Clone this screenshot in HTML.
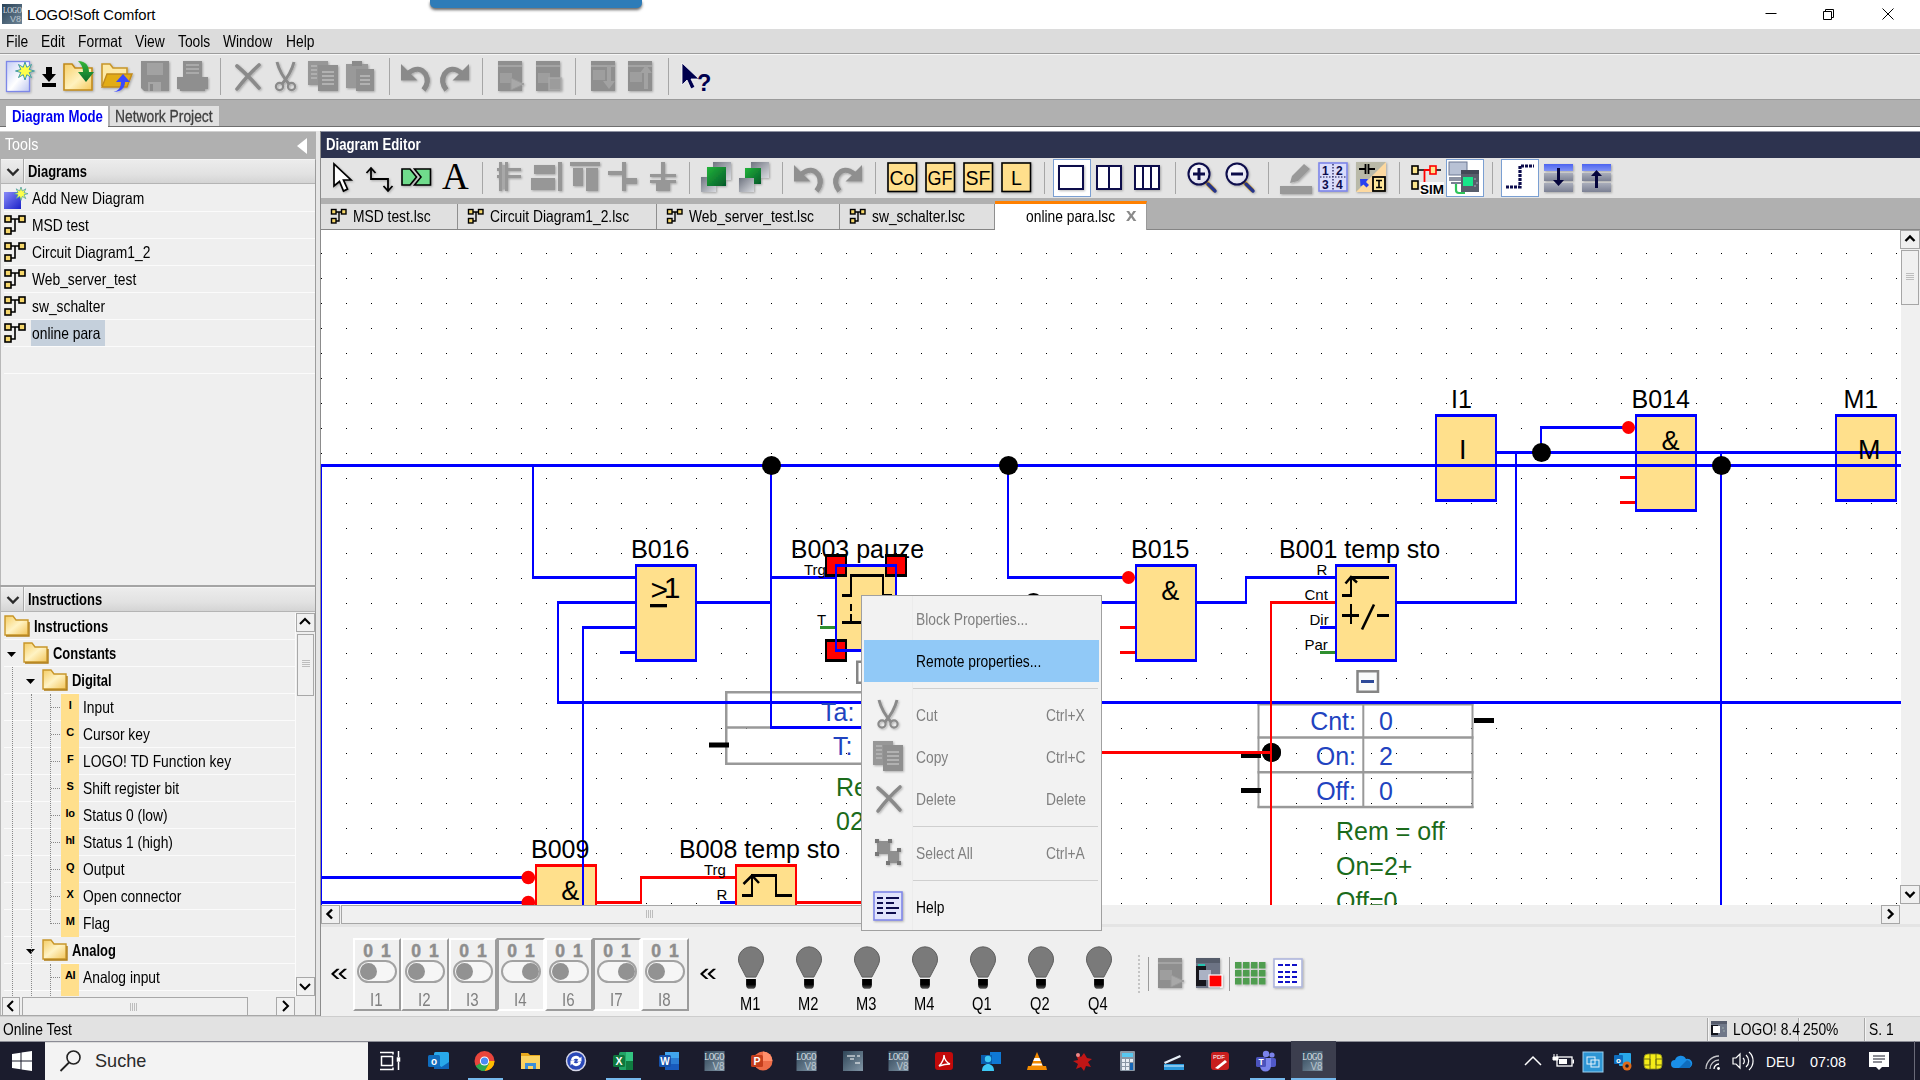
<!DOCTYPE html>
<html lang="en">
<head>
<meta charset="utf-8">
<title>LOGO!Soft Comfort</title>
<style>
*{box-sizing:border-box;margin:0;padding:0}
html,body{width:1920px;height:1080px;overflow:hidden;background:#efefef}
body{position:relative;font-family:"Liberation Sans",sans-serif;font-size:16px;color:#000}
.a{position:absolute}
.t{position:absolute;white-space:nowrap;transform-origin:0 50%;transform:scaleX(.838);line-height:20px;font-size:16.5px}
.b{font-weight:bold}
svg{position:absolute;overflow:visible}
</style>
</head>
<body>
<!-- title bar -->
<div class="a" style="left:0;top:0;width:1920px;height:29px;background:#fff"></div>
<svg style="left:2px;top:4px" width="20" height="20" viewBox="0 0 20 20">
<defs><linearGradient id="lg0" x1="0" y1="0" x2="1" y2="1"><stop offset="0" stop-color="#2a4257"/><stop offset="1" stop-color="#6d8496"/></linearGradient></defs>
<rect width="20" height="20" fill="url(#lg0)"/>
<text x="1" y="9" font-family="Liberation Serif,serif" font-size="9" fill="#e8eef2" textLength="19" lengthAdjust="spacingAndGlyphs">LOGO</text>
<text x="8" y="18" font-family="Liberation Sans,sans-serif" font-size="9" fill="#b9c6cf" textLength="11" lengthAdjust="spacingAndGlyphs">V8</text>
</svg>
<div class="a" style="left:27px;top:5px;font-size:14.800px;line-height:20px;white-space:nowrap;letter-spacing:-0.1px">LOGO!Soft Comfort</div>
<div class="a" style="left:430px;top:0;width:212px;height:8px;background:#2d7cb8;border-radius:0 0 5px 5px;box-shadow:0 2px 3px rgba(0,0,0,.6)"></div>
<svg style="left:1750px;top:0" width="170" height="29" viewBox="0 0 170 29" fill="none" stroke="#000" stroke-width="1">
<path d="M15.5 13.5h11"/>
<path d="M73.500 11.500h8v8h-8z M75.500 11.500v-2h8v8h-2"/>
<path d="M132.500 8.500l11 11 M143.500 8.500l-11 11"/>
</svg>
<!-- menu bar -->
<div class="a" style="left:0;top:29px;width:1920px;height:24px;background:#dcdcdc"></div>
<div class="a" style="left:0;top:53px;width:1920px;height:1px;background:#9c9c9c"></div>
<div class="a" style="left:0;top:54px;width:1920px;height:1px;background:#f6f6f6;z-index:1"></div>
<span class="t" style="left:6px;top:31px">File</span>
<span class="t" style="left:41px;top:31px">Edit</span>
<span class="t" style="left:78px;top:31px">Format</span>
<span class="t" style="left:135px;top:31px">View</span>
<span class="t" style="left:178px;top:31px">Tools</span>
<span class="t" style="left:223px;top:31px">Window</span>
<span class="t" style="left:286px;top:31px">Help</span>
<!-- main toolbar -->
<div class="a" style="left:0;top:54px;width:1920px;height:45px;background:#e4e4e4"></div>
<div class="a" style="left:0;top:99px;width:1920px;height:28px;background:#b0b0b0;border-top:1px solid #9a9a9a"></div>
<div class="a" style="left:0;top:126px;width:1920px;height:1px;background:#6e6e6e"></div>
<div class="a" style="left:0;top:127px;width:1920px;height:4px;background:#fff"></div>
<div class="a" style="left:6px;top:106px;width:102px;height:22px;background:#fff"></div>
<div class="a" style="left:110px;top:106px;width:109px;height:20px;background:#e0e0e0"></div>
<span class="t b" style="left:12px;top:106px;color:#0000f0;transform:scaleX(.8)">Diagram Mode</span>
<span class="t" style="left:115px;top:106px;color:#404040;-webkit-text-stroke:.3px #404040">Network Project</span>
<svg style="left:0;top:54px" width="730" height="45" viewBox="0 54 730 45">
<defs>
<linearGradient id="gPage" x1="0" y1="0" x2="1" y2="1"><stop offset="0" stop-color="#c3cdf5"/><stop offset=".55" stop-color="#fff"/><stop offset="1" stop-color="#bcc6f0"/></linearGradient>
<linearGradient id="gFold" x1="0" y1="0" x2="1" y2="1"><stop offset="0" stop-color="#f7cf69"/><stop offset=".55" stop-color="#fff2be"/><stop offset="1" stop-color="#f5c85a"/></linearGradient>
<linearGradient id="gGreen" x1="0" y1="0" x2="0" y2="1"><stop offset="0" stop-color="#35b63a"/><stop offset="1" stop-color="#0b6d2b"/></linearGradient>
<filter id="sh" x="-20%" y="-20%" width="150%" height="150%"><feDropShadow dx="1" dy="1" stdDeviation=".8" flood-color="#000" flood-opacity=".28"/></filter>
</defs>
<!-- new -->
<g filter="url(#sh)">
<rect x="6.500" y="61.500" width="23" height="30" fill="url(#gPage)" stroke="#7d88e8" stroke-width="1.3"/>
<path d="M25 62l1.800 5.300 4.700-2.800-2.300 5 5.300 1.500-5.300 1.500 2.300 5-4.700-2.800-1.800 5.300-1.800-5.300-4.700 2.800 2.300-5-5.300-1.500 5.300-1.500-2.300-5 4.700 2.800z" fill="#ffff4a" stroke="#3f9aa8" stroke-width="1"/>
</g>
<!-- download -->
<path d="M46 67h6v7h4l-7 8-7-8h4z M42 83h14v4h-14z" fill="#000"/>
<!-- folder green arrow -->
<g filter="url(#sh)">
<path d="M64 64h8l3 4h17v22h-28z" fill="url(#gFold)" stroke="#c18a1c" stroke-width="1.600"/>
<path d="M78 61c8 0 11 5 11 11h5l-8 10-8-10h5c0-5-2-8-5-11z" fill="url(#gGreen)"/>
</g>
<!-- folder open blue arrow -->
<g filter="url(#sh)">
<path d="M102 86v-22h8l3 4h14v6" fill="#fde9a6" stroke="#c8962a" stroke-width="1.600"/>
<path d="M102 87l5-13h25l-5 13z" fill="#e2ac17" stroke="#c18a1c" stroke-width="1.400"/>
<path d="M113 92c6-1 8-5 8-10h-5l7-8 7 8h-5c0 6-4 10-12 10z" fill="#3a48ff"/>
</g>
<!-- floppy -->
<g filter="url(#sh)" fill="#8f8f8f">
<path d="M141 61h28v30h-25l-3-3z"/>
<rect x="147" y="63" width="16" height="12" fill="#a2a2a2"/>
<rect x="148" y="82" width="13" height="9" fill="#a6a6a6"/><rect x="150" y="84" width="3" height="7" fill="#8a8a8a"/>
</g>
<!-- printer -->
<g filter="url(#sh)" fill="#8f8f8f">
<rect x="183" y="61" width="19" height="16"/>
<path d="M186 65h13M186 69h13M186 73h13" stroke="#b4b4b4" stroke-width="1.600"/>
<rect x="177" y="77" width="31" height="12"/><rect x="180" y="89" width="25" height="2"/>
</g>
<path d="M220.500 58v37 M389.500 58v37 M482.500 58v37 M575.500 58v37 M668.500 58v37" stroke="#a6a6a6" stroke-width="1" fill="none"/>
<!-- X -->
<g filter="url(#sh)"><path d="M237 66c6 5 15 14 22 22 M259 65c-8 7-16 16-22 24" stroke="#8a8a8a" stroke-width="3.600" stroke-linecap="round" fill="none"/></g>
<!-- scissors -->
<g filter="url(#sh)" stroke="#8a8a8a" fill="none"><path d="M277 62c2 8 6 15 12 22 M294 62c-2 8-6 15-12 22" stroke-width="3"/><circle cx="279.500" cy="86.500" r="3.600" stroke-width="2.200"/><circle cx="291.500" cy="86.500" r="3.600" stroke-width="2.200"/></g>
<!-- copy -->
<g filter="url(#sh)"><rect x="308" y="61" width="20" height="24" fill="#979797"/><path d="M311 66h6M311 70h6M311 74h6M311 78h6" stroke="#b8b8b8" stroke-width="1.500"/><rect x="318" y="65" width="20" height="26" fill="#8f8f8f"/><path d="M322 72h12M322 76h12M322 80h12M322 84h12" stroke="#bdbdbd" stroke-width="1.500"/></g>
<!-- paste -->
<g filter="url(#sh)"><rect x="346" y="64" width="22" height="24" fill="#999"/><rect x="352" y="61" width="10" height="5" fill="#8a8a8a"/><rect x="356" y="69" width="18" height="22" fill="#8f8f8f"/><path d="M360 76h10M360 80h10M360 84h10" stroke="#bdbdbd" stroke-width="1.500"/></g>
<!-- undo / redo -->
<g filter="url(#sh)"><path d="M401 64L401 80.5L417.5 80.5z" fill="#8a8a8a"/><path d="M408.5 73Q419 65 425.5 74Q430 82 423.5 90" fill="none" stroke="#8a8a8a" stroke-width="5.200"/><path d="M469 64L469 80.5L452.5 80.5z" fill="#8a8a8a"/><path d="M461.5 73Q451 65 444.5 74Q440 82 446.5 90" fill="none" stroke="#8a8a8a" stroke-width="5.200"/></g>
<!-- gray icons -->
<g filter="url(#sh)">
<rect x="498" y="61" width="24" height="30" fill="#8f8f8f"/><rect x="498" y="65" width="24" height="2" fill="#a4a4a4"/><rect x="500" y="73" width="12" height="10" fill="#9e9e9e"/><path d="M511 78l13 6-13 6z" fill="#a8a8a8" stroke="#9a9a9a"/>
<rect x="536" y="61" width="24" height="30" fill="#8f8f8f"/><rect x="536" y="65" width="24" height="2" fill="#a4a4a4"/><rect x="538" y="73" width="12" height="10" fill="#9e9e9e"/><rect x="549" y="78" width="12" height="12" fill="#9c9c9c" stroke="#a8a8a8" stroke-width="1.500"/>
<rect x="591" y="61" width="24" height="30" fill="#8f8f8f"/><rect x="591" y="65" width="24" height="2" fill="#a4a4a4"/><rect x="593" y="70" width="12" height="10" fill="#9e9e9e"/><path d="M607 65h4v16h4l-6 8-6-8h4z" fill="#a2a2a2"/>
<rect x="628" y="61" width="24" height="30" fill="#8f8f8f"/><rect x="628" y="65" width="24" height="2" fill="#a4a4a4"/><rect x="630" y="72" width="12" height="10" fill="#9e9e9e"/><path d="M644 89h4v-16h4l-6-8-6 8h4z" fill="#a2a2a2"/>
</g>
<!-- cursor ? -->
<path d="M682 63v22l5-5 4 9 4-2-4-8h8z" fill="#00004e" stroke="#fff" stroke-width=".8"/>
<text x="697" y="90.500" font-family="Liberation Sans,sans-serif" font-weight="bold" font-size="23.500" fill="#00004e">?</text>
</svg>
<!-- left panel -->
<div class="a" style="left:0;top:131px;width:316px;height:29px;background:#b0b0b0;border-top:1px solid #d0d0d0"></div>
<span class="t" style="left:5px;top:135px;color:#fff;font-size:17px">Tools</span>
<svg style="left:294px;top:136px" width="14" height="20"><path d="M13 2v16l-10-8z" fill="#fff"/></svg>
<div class="a" style="left:0;top:160px;width:316px;height:858px;background:#efefef;border-left:1px solid #b8b8b8;border-right:1px solid #9c9c9c"></div>
<div class="a" style="left:316px;top:131px;width:5px;height:887px;background:#e6e6e6"></div>
<div class="a" style="left:1px;top:159px;width:314px;height:25px;background:linear-gradient(#ececec,#e2e2e2 60%,#d4d4d4);border-bottom:1px solid #b4b4b4;border-top:1px solid #f4f4f4"></div>
<div class="a" style="left:23px;top:159px;width:1px;height:24px;background:#a8a8a8"></div><div class="a" style="left:24px;top:159px;width:1px;height:24px;background:#f6f6f6"></div>
<svg style="left:6px;top:167px" width="14" height="10"><path d="M1.500 2l5.500 5.500 5.500-5.500" fill="none" stroke="#2a2a2a" stroke-width="2.400"/></svg>
<span class="t b" style="left:28px;top:161px;transform:scaleX(.785)">Diagrams</span>
<div class="a" style="left:4px;top:211px;width:311px;height:1px;background:#fbfbfb"></div>
<svg style="left:3px;top:187px" width="26" height="24" viewBox="0 0 26 24"><defs><linearGradient id="gb" x1="0" y1="0" x2="1" y2="1"><stop offset="0" stop-color="#8a8cf8"/><stop offset="1" stop-color="#1a22c8"/></linearGradient></defs><rect x="1" y="5" width="17" height="17" fill="url(#gb)"/><path d="M18 0l1.300 4 3.500-2.200-1.800 3.800 4 1.100-4 1.100 1.800 3.800-3.500-2.200-1.300 4-1.300-4-3.500 2.200 1.800-3.800-4-1.100 4-1.100-1.800-3.800 3.500 2.200z" fill="#ffff4a" stroke="#3f9aa8" stroke-width=".7"/></svg>
<span class="t" style="left:32px;top:188px">Add New Diagram</span>
<div class="a" style="left:4px;top:238px;width:311px;height:1px;background:#fbfbfb"></div>
<svg style="left:3px;top:214px" width="24" height="22" viewBox="0 0 24 22"><path d="M8 5h8M12 5v12h-4" fill="none" stroke="#000" stroke-width="1.600"/><rect x="2" y="2" width="6" height="6" fill="#f6d76b" stroke="#000" stroke-width="1.600"/><rect x="16" y="2" width="6" height="6" fill="#f6d76b" stroke="#000" stroke-width="1.600"/><rect x="2" y="14" width="6" height="6" fill="#f6d76b" stroke="#000" stroke-width="1.600"/></svg>
<span class="t" style="left:32px;top:215px">MSD test</span>
<div class="a" style="left:4px;top:265px;width:311px;height:1px;background:#fbfbfb"></div>
<svg style="left:3px;top:241px" width="24" height="22" viewBox="0 0 24 22"><path d="M8 5h8M12 5v12h-4" fill="none" stroke="#000" stroke-width="1.600"/><rect x="2" y="2" width="6" height="6" fill="#f6d76b" stroke="#000" stroke-width="1.600"/><rect x="16" y="2" width="6" height="6" fill="#f6d76b" stroke="#000" stroke-width="1.600"/><rect x="2" y="14" width="6" height="6" fill="#f6d76b" stroke="#000" stroke-width="1.600"/></svg>
<span class="t" style="left:32px;top:242px">Circuit Diagram1_2</span>
<div class="a" style="left:4px;top:292px;width:311px;height:1px;background:#fbfbfb"></div>
<svg style="left:3px;top:268px" width="24" height="22" viewBox="0 0 24 22"><path d="M8 5h8M12 5v12h-4" fill="none" stroke="#000" stroke-width="1.600"/><rect x="2" y="2" width="6" height="6" fill="#f6d76b" stroke="#000" stroke-width="1.600"/><rect x="16" y="2" width="6" height="6" fill="#f6d76b" stroke="#000" stroke-width="1.600"/><rect x="2" y="14" width="6" height="6" fill="#f6d76b" stroke="#000" stroke-width="1.600"/></svg>
<span class="t" style="left:32px;top:269px">Web_server_test</span>
<div class="a" style="left:4px;top:319px;width:311px;height:1px;background:#fbfbfb"></div>
<svg style="left:3px;top:295px" width="24" height="22" viewBox="0 0 24 22"><path d="M8 5h8M12 5v12h-4" fill="none" stroke="#000" stroke-width="1.600"/><rect x="2" y="2" width="6" height="6" fill="#f6d76b" stroke="#000" stroke-width="1.600"/><rect x="16" y="2" width="6" height="6" fill="#f6d76b" stroke="#000" stroke-width="1.600"/><rect x="2" y="14" width="6" height="6" fill="#f6d76b" stroke="#000" stroke-width="1.600"/></svg>
<span class="t" style="left:32px;top:296px">sw_schalter</span>
<div class="a" style="left:4px;top:346px;width:311px;height:1px;background:#fbfbfb"></div>
<svg style="left:3px;top:322px" width="24" height="22" viewBox="0 0 24 22"><path d="M8 5h8M12 5v12h-4" fill="none" stroke="#000" stroke-width="1.600"/><rect x="2" y="2" width="6" height="6" fill="#f6d76b" stroke="#000" stroke-width="1.600"/><rect x="16" y="2" width="6" height="6" fill="#f6d76b" stroke="#000" stroke-width="1.600"/><rect x="2" y="14" width="6" height="6" fill="#f6d76b" stroke="#000" stroke-width="1.600"/></svg>
<div class="a" style="left:31px;top:320px;width:74px;height:26px;background:#c5d0dc"></div>
<span class="t" style="left:32px;top:323px">online para</span>
<div class="a" style="left:4px;top:373px;width:311px;height:1px;background:#fbfbfb"></div>
<div class="a" style="left:0;top:585px;width:316px;height:2px;background:#a4a4a4"></div>
<div class="a" style="left:1px;top:587px;width:314px;height:25px;background:linear-gradient(#ececec,#e2e2e2 60%,#d4d4d4);border-bottom:1px solid #b4b4b4;border-top:1px solid #f4f4f4"></div>
<div class="a" style="left:23px;top:587px;width:1px;height:24px;background:#a8a8a8"></div><div class="a" style="left:24px;top:587px;width:1px;height:24px;background:#f6f6f6"></div>
<svg style="left:6px;top:595px" width="14" height="10"><path d="M1.500 2l5.500 5.500 5.500-5.500" fill="none" stroke="#2a2a2a" stroke-width="2.400"/></svg>
<span class="t b" style="left:28px;top:589px;transform:scaleX(.785)">Instructions</span>
<div class="a" style="left:4px;top:639px;width:291px;height:1px;background:#fbfbfb"></div>
<svg style="left:4px;top:613px" width="26" height="24" viewBox="0 0 26 24"><defs><linearGradient id="gf1" x1="0" y1="0" x2="1" y2="1"><stop offset="0" stop-color="#f5cd64"/><stop offset=".5" stop-color="#fff3c4"/><stop offset="1" stop-color="#f3c55a"/></linearGradient></defs><path d="M1 3h8l3 4h12v15h-23z" fill="url(#gf1)" stroke="#c8962a" stroke-width="1.400"/><path d="M2 23h23v-14" fill="none" stroke="#b07c14" stroke-width="1.400"/></svg>
<span class="t b" style="left:34px;top:616px;transform:scaleX(.785)">Instructions</span>
<div class="a" style="left:4px;top:666px;width:291px;height:1px;background:#fbfbfb"></div>
<svg style="left:23px;top:640px" width="26" height="24" viewBox="0 0 26 24"><defs><linearGradient id="gf2" x1="0" y1="0" x2="1" y2="1"><stop offset="0" stop-color="#f5cd64"/><stop offset=".5" stop-color="#fff3c4"/><stop offset="1" stop-color="#f3c55a"/></linearGradient></defs><path d="M1 3h8l3 4h12v15h-23z" fill="url(#gf2)" stroke="#c8962a" stroke-width="1.400"/><path d="M2 23h23v-14" fill="none" stroke="#b07c14" stroke-width="1.400"/></svg>
<svg style="left:7px;top:652px" width="10" height="6"><path d="M0 0h9l-4.500 5z" fill="#000"/></svg>
<span class="t b" style="left:53px;top:643px;transform:scaleX(.785)">Constants</span>
<div class="a" style="left:4px;top:693px;width:291px;height:1px;background:#fbfbfb"></div>
<svg style="left:42px;top:667px" width="26" height="24" viewBox="0 0 26 24"><defs><linearGradient id="gf3" x1="0" y1="0" x2="1" y2="1"><stop offset="0" stop-color="#f5cd64"/><stop offset=".5" stop-color="#fff3c4"/><stop offset="1" stop-color="#f3c55a"/></linearGradient></defs><path d="M1 3h8l3 4h12v15h-23z" fill="url(#gf3)" stroke="#c8962a" stroke-width="1.400"/><path d="M2 23h23v-14" fill="none" stroke="#b07c14" stroke-width="1.400"/></svg>
<svg style="left:26px;top:679px" width="10" height="6"><path d="M0 0h9l-4.500 5z" fill="#000"/></svg>
<span class="t b" style="left:72px;top:670px;transform:scaleX(.785)">Digital</span>
<div class="a" style="left:4px;top:720px;width:291px;height:1px;background:#fbfbfb"></div>
<div class="a" style="left:61px;top:694px;width:18px;height:27px;background:#ffdf8c"></div>
<div class="a b" style="left:61px;top:698px;width:18px;height:14px;font-size:11px;line-height:14px;text-align:center;letter-spacing:-.5px">I</div>
<div class="a" style="left:51px;top:707px;width:9px;height:0;border-top:1px dotted #888"></div>
<span class="t" style="left:83px;top:697px">Input</span>
<div class="a" style="left:4px;top:747px;width:291px;height:1px;background:#fbfbfb"></div>
<div class="a" style="left:61px;top:721px;width:18px;height:27px;background:#ffdf8c"></div>
<div class="a b" style="left:61px;top:725px;width:18px;height:14px;font-size:11px;line-height:14px;text-align:center;letter-spacing:-.5px">C</div>
<div class="a" style="left:51px;top:734px;width:9px;height:0;border-top:1px dotted #888"></div>
<span class="t" style="left:83px;top:724px">Cursor key</span>
<div class="a" style="left:4px;top:774px;width:291px;height:1px;background:#fbfbfb"></div>
<div class="a" style="left:61px;top:748px;width:18px;height:27px;background:#ffdf8c"></div>
<div class="a b" style="left:61px;top:752px;width:18px;height:14px;font-size:11px;line-height:14px;text-align:center;letter-spacing:-.5px">F</div>
<div class="a" style="left:51px;top:761px;width:9px;height:0;border-top:1px dotted #888"></div>
<span class="t" style="left:83px;top:751px">LOGO! TD Function key</span>
<div class="a" style="left:4px;top:801px;width:291px;height:1px;background:#fbfbfb"></div>
<div class="a" style="left:61px;top:775px;width:18px;height:27px;background:#ffdf8c"></div>
<div class="a b" style="left:61px;top:779px;width:18px;height:14px;font-size:11px;line-height:14px;text-align:center;letter-spacing:-.5px">S</div>
<div class="a" style="left:51px;top:788px;width:9px;height:0;border-top:1px dotted #888"></div>
<span class="t" style="left:83px;top:778px">Shift register bit</span>
<div class="a" style="left:4px;top:828px;width:291px;height:1px;background:#fbfbfb"></div>
<div class="a" style="left:61px;top:802px;width:18px;height:27px;background:#ffdf8c"></div>
<div class="a b" style="left:61px;top:806px;width:18px;height:14px;font-size:11px;line-height:14px;text-align:center;letter-spacing:-.5px">lo</div>
<div class="a" style="left:51px;top:815px;width:9px;height:0;border-top:1px dotted #888"></div>
<span class="t" style="left:83px;top:805px">Status 0 (low)</span>
<div class="a" style="left:4px;top:855px;width:291px;height:1px;background:#fbfbfb"></div>
<div class="a" style="left:61px;top:829px;width:18px;height:27px;background:#ffdf8c"></div>
<div class="a b" style="left:61px;top:833px;width:18px;height:14px;font-size:11px;line-height:14px;text-align:center;letter-spacing:-.5px">hI</div>
<div class="a" style="left:51px;top:842px;width:9px;height:0;border-top:1px dotted #888"></div>
<span class="t" style="left:83px;top:832px">Status 1 (high)</span>
<div class="a" style="left:4px;top:882px;width:291px;height:1px;background:#fbfbfb"></div>
<div class="a" style="left:61px;top:856px;width:18px;height:27px;background:#ffdf8c"></div>
<div class="a b" style="left:61px;top:860px;width:18px;height:14px;font-size:11px;line-height:14px;text-align:center;letter-spacing:-.5px">Q</div>
<div class="a" style="left:51px;top:869px;width:9px;height:0;border-top:1px dotted #888"></div>
<span class="t" style="left:83px;top:859px">Output</span>
<div class="a" style="left:4px;top:909px;width:291px;height:1px;background:#fbfbfb"></div>
<div class="a" style="left:61px;top:883px;width:18px;height:27px;background:#ffdf8c"></div>
<div class="a b" style="left:61px;top:887px;width:18px;height:14px;font-size:11px;line-height:14px;text-align:center;letter-spacing:-.5px">X</div>
<div class="a" style="left:51px;top:896px;width:9px;height:0;border-top:1px dotted #888"></div>
<span class="t" style="left:83px;top:886px">Open connector</span>
<div class="a" style="left:4px;top:936px;width:291px;height:1px;background:#fbfbfb"></div>
<div class="a" style="left:61px;top:910px;width:18px;height:27px;background:#ffdf8c"></div>
<div class="a b" style="left:61px;top:914px;width:18px;height:14px;font-size:11px;line-height:14px;text-align:center;letter-spacing:-.5px">M</div>
<div class="a" style="left:51px;top:923px;width:9px;height:0;border-top:1px dotted #888"></div>
<span class="t" style="left:83px;top:913px">Flag</span>
<div class="a" style="left:4px;top:963px;width:291px;height:1px;background:#fbfbfb"></div>
<svg style="left:42px;top:937px" width="26" height="24" viewBox="0 0 26 24"><defs><linearGradient id="gf4" x1="0" y1="0" x2="1" y2="1"><stop offset="0" stop-color="#f5cd64"/><stop offset=".5" stop-color="#fff3c4"/><stop offset="1" stop-color="#f3c55a"/></linearGradient></defs><path d="M1 3h8l3 4h12v15h-23z" fill="url(#gf4)" stroke="#c8962a" stroke-width="1.400"/><path d="M2 23h23v-14" fill="none" stroke="#b07c14" stroke-width="1.400"/></svg>
<svg style="left:26px;top:949px" width="10" height="6"><path d="M0 0h9l-4.500 5z" fill="#000"/></svg>
<span class="t b" style="left:72px;top:940px;transform:scaleX(.785)">Analog</span>
<div class="a" style="left:4px;top:990px;width:291px;height:1px;background:#fbfbfb"></div>
<div class="a" style="left:61px;top:964px;width:18px;height:27px;background:#ffdf8c"></div>
<div class="a b" style="left:61px;top:968px;width:18px;height:14px;font-size:11px;line-height:14px;text-align:center;letter-spacing:-.5px">AI</div>
<div class="a" style="left:51px;top:977px;width:9px;height:0;border-top:1px dotted #888"></div>
<span class="t" style="left:83px;top:967px">Analog input</span>
<div class="a" style="left:61px;top:991px;width:18px;height:5px;background:#ffdf8c"></div>
<div class="a" style="left:295px;top:613px;width:1px;height:383px;background:#fbfbfb"></div>
<div class="a" style="left:12px;top:667px;width:0;height:329px;border-left:1px dotted #888"></div>
<div class="a" style="left:31px;top:694px;width:0;height:302px;border-left:1px dotted #888"></div>
<div class="a" style="left:50px;top:694px;width:0;height:230px;border-left:1px dotted #888"></div>
<div class="a" style="left:50px;top:964px;width:0;height:32px;border-left:1px dotted #888"></div>
<div class="a" style="left:296px;top:613px;width:19px;height:19px;background:#f1f1f1;border:1px solid #a8a8a8"></div><svg style="left:296px;top:613px" width="18" height="18"><path d="M4 11l5-5 5 5" fill="none" stroke="#000" stroke-width="2"/></svg>
<div class="a" style="left:296px;top:977px;width:19px;height:19px;background:#f1f1f1;border:1px solid #a8a8a8"></div><svg style="left:296px;top:977px" width="18" height="18"><path d="M4 7l5 5 5-5" fill="none" stroke="#000" stroke-width="2"/></svg>
<div class="a" style="left:297px;top:634px;width:17px;height:62px;background:#f0f0f0;border:1px solid #a8a8a8"></div>
<div class="a" style="left:302px;top:660px;width:8px;height:7px;background:repeating-linear-gradient(#bdbdbd 0 1px,transparent 1px 2px)"></div>
<div class="a" style="left:2px;top:997px;width:18px;height:19px;background:#f1f1f1;border:1px solid #a8a8a8"></div><svg style="left:2px;top:997px" width="18" height="18"><path d="M11 4l-5 5 5 5" fill="none" stroke="#000" stroke-width="2"/></svg>
<div class="a" style="left:276px;top:997px;width:19px;height:19px;background:#f1f1f1;border:1px solid #a8a8a8"></div><svg style="left:276px;top:997px" width="18" height="18"><path d="M7 4l5 5-5 5" fill="none" stroke="#000" stroke-width="2"/></svg>
<div class="a" style="left:22px;top:997px;width:226px;height:19px;background:#f0f0f0;border:1px solid #a8a8a8"></div>
<div class="a" style="left:130px;top:1003px;width:7px;height:8px;background:repeating-linear-gradient(90deg,#bdbdbd 0 1px,transparent 1px 2px)"></div>
<div class="a" style="left:0;top:1015px;width:1920px;height:27px;background:#e2e2e2;border-top:1px solid #a8a8a8"></div><div class="a" style="left:0;top:1016px;width:1920px;height:1px;background:#cdcdcd"></div>
<span class="t" style="left:3px;top:1019px">Online Test</span>
<!-- editor header/toolbar/tabs -->
<div class="a" style="left:320px;top:131px;width:1px;height:885px;background:#8c8c8c"></div>
<div class="a" style="left:321px;top:131px;width:1599px;height:27px;background:#2d334f;border-top:1px solid #8f93a3"></div>
<span class="t b" style="left:326px;top:134px;color:#fff;transform:scaleX(.8)">Diagram Editor</span>
<div class="a" style="left:321px;top:158px;width:1599px;height:40px;background:#e4e4e4"></div>
<div class="a" style="left:321px;top:198px;width:1599px;height:32px;background:#b0b0b0"></div>
<div class="a" style="left:321px;top:204px;width:674px;height:25px;background:#e0e0e0"></div>
<div class="a" style="left:321px;top:229px;width:1599px;height:1px;background:#858585"></div>
<div class="a" style="left:995px;top:201px;width:152px;height:29px;background:#fff;border-top:3.500px solid #ff8000;border-right:1px solid #9a9a9a"></div>
<div class="a" style="left:457px;top:204px;width:1px;height:25px;background:#8f8f8f"></div>
<div class="a" style="left:656px;top:204px;width:1px;height:25px;background:#8f8f8f"></div>
<div class="a" style="left:839px;top:204px;width:1px;height:25px;background:#8f8f8f"></div>
<div class="a" style="left:994px;top:204px;width:1px;height:25px;background:#8f8f8f"></div>
<svg style="left:330px;top:208px" width="18" height="17"><path d="M6 4h6M9 4v9h-3" fill="none" stroke="#000" stroke-width="1.400"/><rect x="1.500" y="1.500" width="4.500" height="4.500" fill="#f6d76b" stroke="#000" stroke-width="1.400"/><rect x="11.500" y="1.500" width="4.500" height="4.500" fill="#f6d76b" stroke="#000" stroke-width="1.400"/><rect x="1.500" y="10.500" width="4.500" height="4.500" fill="#f6d76b" stroke="#000" stroke-width="1.400"/></svg>
<svg style="left:467px;top:208px" width="18" height="17"><path d="M6 4h6M9 4v9h-3" fill="none" stroke="#000" stroke-width="1.400"/><rect x="1.500" y="1.500" width="4.500" height="4.500" fill="#f6d76b" stroke="#000" stroke-width="1.400"/><rect x="11.500" y="1.500" width="4.500" height="4.500" fill="#f6d76b" stroke="#000" stroke-width="1.400"/><rect x="1.500" y="10.500" width="4.500" height="4.500" fill="#f6d76b" stroke="#000" stroke-width="1.400"/></svg>
<svg style="left:666px;top:208px" width="18" height="17"><path d="M6 4h6M9 4v9h-3" fill="none" stroke="#000" stroke-width="1.400"/><rect x="1.500" y="1.500" width="4.500" height="4.500" fill="#f6d76b" stroke="#000" stroke-width="1.400"/><rect x="11.500" y="1.500" width="4.500" height="4.500" fill="#f6d76b" stroke="#000" stroke-width="1.400"/><rect x="1.500" y="10.500" width="4.500" height="4.500" fill="#f6d76b" stroke="#000" stroke-width="1.400"/></svg>
<svg style="left:849px;top:208px" width="18" height="17"><path d="M6 4h6M9 4v9h-3" fill="none" stroke="#000" stroke-width="1.400"/><rect x="1.500" y="1.500" width="4.500" height="4.500" fill="#f6d76b" stroke="#000" stroke-width="1.400"/><rect x="11.500" y="1.500" width="4.500" height="4.500" fill="#f6d76b" stroke="#000" stroke-width="1.400"/><rect x="1.500" y="10.500" width="4.500" height="4.500" fill="#f6d76b" stroke="#000" stroke-width="1.400"/></svg>
<span class="t" style="left:353px;top:206px">MSD test.lsc</span>
<span class="t" style="left:490px;top:206px">Circuit Diagram1_2.lsc</span>
<span class="t" style="left:689px;top:206px">Web_server_test.lsc</span>
<span class="t" style="left:872px;top:206px">sw_schalter.lsc</span>
<span class="t" style="left:1026px;top:206px">online para.lsc</span>
<span class="t b" style="left:1126px;top:205px;color:#8a8a8a;font-size:18px;transform:scaleX(1.05)">x</span>
<svg style="left:321px;top:158px" width="1300" height="40" viewBox="321 158 1300 40">
<defs>
<linearGradient id="gG2" x1="0" y1="0" x2="1" y2="1"><stop offset="0" stop-color="#22b43a"/><stop offset="1" stop-color="#03592a"/></linearGradient>
<linearGradient id="gGy" x1="0" y1="0" x2="1" y2="1"><stop offset="0" stop-color="#6f7480"/><stop offset="1" stop-color="#d9dbe0"/></linearGradient>
<linearGradient id="gBar" x1="0" y1="0" x2="0" y2="1"><stop offset="0" stop-color="#a9adbb"/><stop offset="1" stop-color="#7c8194"/></linearGradient>
<linearGradient id="gBlu" x1="0" y1="0" x2="0" y2="1"><stop offset="0" stop-color="#4c63f0"/><stop offset="1" stop-color="#7f93f5"/></linearGradient>
<radialGradient id="gLens" cx=".4" cy=".35" r=".7"><stop offset="0" stop-color="#fff"/><stop offset="1" stop-color="#dcdcec"/></radialGradient>
</defs>
<!-- arrow -->
<g filter="url(#sh)"><path d="M334 164v22l5.500-4.500 4 9.500 4-2-4-9h7.500z" fill="#fff" stroke="#000" stroke-width="1.700" stroke-linejoin="miter"/></g>
<!-- connector -->
<g filter="url(#sh)" fill="none" stroke="#000" stroke-width="1.800"><path d="M371 168v11h17v12"/><path d="M366.500 173l4.500-5 4.500 5 M383.500 186l4.500 5 4.500-5"/></g>
<!-- green blocks -->
<g filter="url(#sh)"><path d="M402 169h8l6.500 8-6.500 8h-8z" fill="#6fdc8c" stroke="#000" stroke-width="1.600"/><path d="M414.500 169h16v16h-16l6.500-8z" fill="#6fdc8c" stroke="#000" stroke-width="1.600"/></g>
<text x="442" y="189" font-family="Liberation Serif,serif" font-size="37" fill="#000">A</text>
<path d="M482.500 162v32 M689.500 162v32 M782.500 162v32 M875.500 162v32 M1044.500 162v32 M1175.500 162v32 M1268.500 162v32 M1399.500 162v32 M1492.500 162v32" stroke="#a6a6a6" fill="none"/>
<!-- align icons -->
<g filter="url(#sh)" fill="#979797">
<path d="M499 162h3v29h-3z M505 162h3v29h-3z M497 168h24v3h-24z M497 175h24v3h-24z"/><rect x="502" y="165" width="3" height="24" fill="#a8a8a8"/>
<rect x="534" y="165" width="21" height="9"/><rect x="531" y="178" width="24" height="12"/><rect x="558" y="162" width="4" height="29"/>
<rect x="570" y="162" width="30" height="4"/><rect x="573" y="168" width="10" height="18"/><rect x="586" y="168" width="12" height="23"/>
<rect x="622" y="162" width="4" height="29"/><rect x="608" y="171" width="14" height="4"/><rect x="626" y="178" width="11" height="6"/>
<rect x="661" y="162" width="4" height="29"/><rect x="650" y="174" width="26" height="3"/><rect x="650" y="180" width="26" height="3"/><rect x="656" y="183" width="14" height="8"/>
</g>
<!-- green squares -->
<g filter="url(#sh)">
<rect x="713" y="162" width="18" height="18" fill="url(#gGy)"/><rect x="701" y="177" width="15" height="15" fill="url(#gGy)"/><rect x="707" y="167" width="19" height="19" fill="url(#gG2)"/>
<rect x="751" y="162" width="18" height="16" fill="url(#gGy)"/><rect x="745" y="168" width="16" height="16" fill="url(#gG2)"/><rect x="739" y="178" width="15" height="14" fill="url(#gGy)"/>
</g>
<!-- undo/redo -->
<g filter="url(#sh)"><path d="M794 165L794 181.5L810.5 181.5z" fill="#8f8f8f"/><path d="M801.5 174Q812 166 818.5 175Q823 183 816.5 191" fill="none" stroke="#8f8f8f" stroke-width="5.200"/><path d="M862 165L862 181.5L845.5 181.5z" fill="#8f8f8f"/><path d="M854.5 174Q844 166 837.5 175Q833 183 839.5 191" fill="none" stroke="#8f8f8f" stroke-width="5.200"/></g>
<!-- Co GF SF L -->
<g filter="url(#sh)" fill="#ffdf8c" stroke="#000" stroke-width="1.600"><rect x="888" y="163" width="28.500" height="28.500"/><rect x="926" y="163" width="28.500" height="28.500"/><rect x="964" y="163" width="28.500" height="28.500"/><rect x="1002" y="163" width="28.500" height="28.500"/></g>
<g font-family="Liberation Sans,sans-serif" font-size="19.500" fill="#000" text-anchor="middle"><text x="902" y="184.500">Co</text><text x="940" y="185" textLength="25" lengthAdjust="spacingAndGlyphs">GF</text><text x="978" y="185">SF</text><text x="1016.500" y="185">L</text></g>
<!-- window layouts -->
<rect x="1053.500" y="159.500" width="37" height="37" fill="#fff" stroke="#7a9fd2"/>
<g filter="url(#sh)" fill="#fff" stroke="#0c0c4c" stroke-width="2"><rect x="1059" y="166" width="24" height="23"/><rect x="1097" y="166" width="24" height="23"/><rect x="1135" y="166" width="24" height="23"/><path d="M1109 166v23 M1143 166v23 M1151 166v23"/></g>
<!-- zoom -->
<g filter="url(#sh)"><path d="M1206 182l8 8" stroke="#d8a018" stroke-width="4.500" stroke-linecap="round"/><path d="M1208 184l7 7" stroke="#27358a" stroke-width="3.500" stroke-linecap="round"/><circle cx="1199" cy="174" r="10.500" fill="url(#gLens)" stroke="#0c0c4c" stroke-width="2"/><path d="M1193 174h12M1199 168v12" stroke="#0c0c4c" stroke-width="3"/></g>
<g filter="url(#sh)"><path d="M1244 182l8 8" stroke="#d8a018" stroke-width="4.500" stroke-linecap="round"/><path d="M1246 184l7 7" stroke="#27358a" stroke-width="3.500" stroke-linecap="round"/><circle cx="1237" cy="174" r="10.500" fill="url(#gLens)" stroke="#0c0c4c" stroke-width="2"/><path d="M1231 174h12" stroke="#0c0c4c" stroke-width="3"/></g>
<!-- pen -->
<g filter="url(#sh)" fill="#999"><rect x="1280" y="186" width="32" height="8"/><path d="M1290 183l2-7 12-12 6 5-12 12z"/></g>
<!-- 1:2 3:4 -->
<g filter="url(#sh)"><rect x="1319" y="163" width="28" height="28" fill="#dadcfb" stroke="#7d86ea" stroke-width="1.600"/></g>
<path d="M1333 164v26M1320 177h26" stroke="#0c0c4c" stroke-width="1.200" stroke-dasharray="1.500 1.500"/>
<g font-family="Liberation Sans,sans-serif" font-weight="bold" font-size="12" fill="#0c0c4c"><text x="1322" y="175">1</text><text x="1336" y="175">2</text><text x="1322" y="189">3</text><text x="1336" y="189">4</text></g>
<!-- collapse icon -->
<g filter="url(#sh)"><rect x="1356" y="162" width="30" height="30" fill="#b9b9a8"/><path d="M1386 162v30h-30z" fill="#fdd9a0"/></g>
<path d="M1359 169h6M1369 169h6M1365.500 164v10M1368.500 164v10" stroke="#000" stroke-width="1.800"/>
<path d="M1360 179h8l-2 3 3 3-2.500 2.500-3-3-3 2z" fill="#2a40f0"/>
<rect x="1373" y="177" width="12" height="14" fill="#ffe69a" stroke="#000" stroke-width="1.800"/><path d="M1376 180.500h6M1376 187.500h6M1379 180v8" stroke="#000" stroke-width="1.600"/>
<!-- SIM -->
<path d="M1418 170h11M1435 170h6" stroke="#000" stroke-width="1.600"/><path d="M1424 170h11M1424.500 170v12" stroke="#f00" stroke-width="1.800" fill="none"/>
<rect x="1412" y="166" width="6" height="8" fill="#fbe58d" stroke="#000" stroke-width="1.600"/><rect x="1412" y="181" width="6" height="8" fill="#fbe58d" stroke="#000" stroke-width="1.600"/><rect x="1430" y="166" width="6" height="8" fill="#fbe58d" stroke="#f00" stroke-width="1.600"/>
<rect x="1420" y="182" width="24" height="13" fill="#fff" opacity=".85"/>
<text x="1420" y="194" font-family="Liberation Sans,sans-serif" font-size="13.500" font-weight="bold" fill="#000" textLength="24" lengthAdjust="spacingAndGlyphs">SIM</text>
<!-- PC/LOGO -->
<rect x="1446.500" y="159.500" width="37" height="37" fill="#fff" stroke="#7a9fd2"/>
<rect x="1449" y="162" width="18" height="13" fill="#b8c1d4" stroke="#6b7692"/><rect x="1449" y="177" width="18" height="4" fill="#8d93a3"/><rect x="1451" y="182" width="14" height="2" fill="#777f92"/>
<path d="M1456 184v6c0 2 1 3 3 3h6" fill="none" stroke="#2fc45a" stroke-width="2.200"/>
<rect x="1461" y="170" width="18" height="22" fill="#585e6b"/><rect x="1463" y="177" width="10" height="9" fill="#17e68a"/><rect x="1461" y="170" width="18" height="4" fill="#434957"/><path d="M1475 178v2M1477 182v2M1475 185v2" stroke="#8d93a3" stroke-width="1.500"/>
<!-- step route -->
<rect x="1501.500" y="159.500" width="37" height="37" fill="#fff" stroke="#7a9fd2"/>
<path d="M1506 187h14v-21h14" fill="none" stroke="#0c0c4c" stroke-width="3.200" stroke-dasharray="3 1"/>
<!-- arrows on bars -->
<g filter="url(#sh)"><rect x="1544" y="164" width="29" height="7" fill="url(#gBlu)"/><rect x="1544" y="173" width="29" height="8" fill="url(#gBar)"/><rect x="1544" y="183" width="29" height="9" fill="url(#gBar)"/>
<rect x="1582" y="164" width="29" height="7" fill="url(#gBlu)"/><rect x="1582" y="173" width="29" height="8" fill="url(#gBar)"/><rect x="1582" y="183" width="29" height="9" fill="url(#gBar)"/></g>
<path d="M1557 168h3v12h4l-5.500 6-5.500-6h4z M1595 188h3v-12h4l-5.500-6-5.500 6h4z" fill="#05053c"/>
</svg>
<!-- canvas -->
<div class="a" style="left:321px;top:230px;width:1580px;height:675px;background:#fff;overflow:hidden">
<svg style="left:0;top:0" width="1580" height="675" viewBox="321 230 1580 675" font-family="Liberation Sans,sans-serif">
<defs><pattern id="grid" x="321" y="253" width="25" height="25" patternUnits="userSpaceOnUse"><rect x="0" y="0" width="1" height="1" fill="#000"/></pattern></defs>
<rect x="321" y="230" width="1580" height="675" fill="url(#grid)"/>
<g fill="none" stroke="#999" stroke-width="2.500"><rect x="726.250" y="692.250" width="300" height="71.500"/><path d="M726 727.500h300"/></g>
<g fill="#999"><rect x="1257.500" y="703" width="2" height="105"/><rect x="1471.500" y="703" width="2" height="105"/><rect x="1362.300" y="703" width="2" height="105"/><rect x="1257.500" y="703" width="216" height="2.500"/><rect x="1257.500" y="736.250" width="216" height="2.500"/><rect x="1257.500" y="771" width="216" height="2.500"/><rect x="1257.500" y="805.800" width="216" height="2.500"/></g>
<rect x="635" y="564" width="62" height="98" fill="#00f"/><rect x="637" y="567" width="58" height="92" fill="#ffe08c"/>
<rect x="835" y="564" width="62" height="88" fill="#00f"/><rect x="837" y="567" width="58" height="82" fill="#ffe08c"/>
<rect x="1135" y="564" width="62" height="98" fill="#00f"/><rect x="1137" y="567" width="58" height="92" fill="#ffe08c"/>
<rect x="1335" y="564" width="62" height="98" fill="#00f"/><rect x="1337" y="567" width="58" height="92" fill="#ffe08c"/>
<rect x="1435" y="414" width="62" height="88" fill="#00f"/><rect x="1437" y="417" width="58" height="82" fill="#ffe08c"/>
<rect x="1635" y="414" width="62" height="98" fill="#00f"/><rect x="1637" y="417" width="58" height="92" fill="#ffe08c"/>
<rect x="1835" y="414" width="62" height="88" fill="#00f"/><rect x="1837" y="417" width="58" height="82" fill="#ffe08c"/>
<rect x="535" y="864" width="62" height="60" fill="#f00"/><rect x="537" y="867" width="58" height="54" fill="#ffe08c"/>
<rect x="735" y="864" width="62" height="60" fill="#f00"/><rect x="737" y="867" width="58" height="54" fill="#ffe08c"/>
<rect x="321" y="464" width="1580" height="3" fill="#00f"/>
<rect x="320" y="464" width="2" height="441" fill="#00f"/>
<rect x="321" y="876" width="201" height="3" fill="#00f"/>
<rect x="321" y="901" width="201" height="3" fill="#00f"/>
<rect x="532" y="464" width="2" height="115" fill="#00f"/>
<rect x="532" y="576" width="103" height="3" fill="#00f"/>
<rect x="770" y="464" width="2" height="265" fill="#00f"/>
<rect x="770" y="576" width="66" height="3" fill="#00f"/>
<rect x="770" y="726" width="263" height="3" fill="#00f"/>
<rect x="1032" y="601" width="2" height="128" fill="#00f"/>
<rect x="697" y="601" width="74" height="3" fill="#00f"/>
<rect x="897" y="601" width="238" height="3" fill="#00f"/>
<rect x="557" y="601" width="78" height="3" fill="#00f"/>
<rect x="557" y="601" width="2" height="103" fill="#00f"/>
<rect x="557" y="701" width="1344" height="3" fill="#00f"/>
<rect x="582" y="626" width="53" height="3" fill="#00f"/>
<rect x="582" y="626" width="2" height="279" fill="#00f"/>
<rect x="620" y="651" width="15" height="3" fill="#00f"/>
<rect x="1007" y="464" width="2" height="115" fill="#00f"/>
<rect x="1007" y="576" width="117" height="3" fill="#00f"/>
<rect x="1197" y="601" width="50" height="3" fill="#00f"/>
<rect x="1245" y="576" width="2" height="28" fill="#00f"/>
<rect x="1245" y="576" width="90" height="3" fill="#00f"/>
<rect x="1397" y="601" width="120" height="3" fill="#00f"/>
<rect x="1515" y="451" width="2" height="153" fill="#00f"/>
<rect x="1497" y="451" width="404" height="3" fill="#00f"/>
<rect x="1540" y="426" width="2" height="28" fill="#00f"/>
<rect x="1540" y="426" width="83" height="3" fill="#00f"/>
<rect x="1720" y="451" width="2" height="454" fill="#00f"/>
<rect x="1320" y="626" width="15" height="3" fill="#00f"/>
<rect x="720" y="901" width="15" height="3" fill="#00f"/>
<rect x="1270" y="601" width="65" height="3" fill="#f00"/>
<rect x="1270" y="601" width="2" height="304" fill="#f00"/>
<rect x="1000" y="751" width="271" height="3" fill="#f00"/>
<rect x="1120" y="626" width="15" height="3" fill="#f00"/>
<rect x="1120" y="651" width="15" height="3" fill="#f00"/>
<rect x="1620" y="476" width="15" height="3" fill="#f00"/>
<rect x="1620" y="501" width="15" height="3" fill="#f00"/>
<rect x="597" y="901" width="45" height="3" fill="#f00"/>
<rect x="640" y="876" width="2" height="28" fill="#f00"/>
<rect x="640" y="876" width="95" height="3" fill="#f00"/>
<rect x="797" y="901" width="83" height="3" fill="#f00"/>
<rect x="820" y="626" width="15" height="3" fill="#2f8f2f"/>
<rect x="1320" y="651" width="15" height="3" fill="#2f8f2f"/>
<circle cx="771.5" cy="465.5" r="9.500" fill="#000"/>
<circle cx="1008.5" cy="465.5" r="9.500" fill="#000"/>
<circle cx="1541.5" cy="452.5" r="9.500" fill="#000"/>
<circle cx="1721.5" cy="465.5" r="9.500" fill="#000"/>
<circle cx="1271.5" cy="752.5" r="9.500" fill="#000"/>
<circle cx="1033.5" cy="602.5" r="9.500" fill="#000"/>
<circle cx="1128.5" cy="577.5" r="6.5" fill="#f00"/>
<circle cx="1628.5" cy="427.5" r="6.5" fill="#f00"/>
<circle cx="528.3" cy="877.5" r="6.8" fill="#f00"/>
<circle cx="528.3" cy="902.5" r="6.8" fill="#f00"/>
<text x="631" y="557.7" font-size="25" fill="#000">B016</text>
<text x="790.8" y="557.7" font-size="25" fill="#000">B003 pauze</text>
<text x="1131" y="557.7" font-size="25" fill="#000">B015</text>
<text x="1279" y="557.7" font-size="25" fill="#000">B001 temp sto</text>
<text x="1451" y="407.7" font-size="25" fill="#000">I1</text>
<text x="1631.5" y="407.7" font-size="25" fill="#000">B014</text>
<text x="1843.5" y="407.7" font-size="25" fill="#000">M1</text>
<text x="531" y="857.7" font-size="25" fill="#000">B009</text>
<text x="679" y="857.7" font-size="25" fill="#000">B008 temp sto</text>
<rect x="825" y="554" width="22" height="23" fill="#000"/>
<rect x="827" y="557" width="18" height="17" fill="#f00"/>
<rect x="885" y="554" width="22" height="23" fill="#000"/>
<rect x="887" y="557" width="18" height="17" fill="#f00"/>
<rect x="825" y="639" width="22" height="23" fill="#000"/>
<rect x="827" y="642" width="18" height="17" fill="#f00"/>
<rect x="885" y="639" width="22" height="23" fill="#000"/>
<rect x="887" y="642" width="18" height="17" fill="#f00"/>
<path d="M835 564h62v88h-62z M837 567v82h58v-82z" fill="#00f" fill-rule="evenodd"/>
<text x="650.5" y="600" font-size="30" fill="#000">&gt;</text>
<text x="663.7" y="598" font-size="30" fill="#000">1</text>
<rect x="650" y="604" width="17" height="3.3" fill="#000"/>
<text x="1161.3" y="600" font-size="27" fill="#000">&amp;</text>
<text x="1661.5" y="450" font-size="27" fill="#000">&amp;</text>
<text x="561.3" y="900" font-size="27" fill="#000">&amp;</text>
<text x="1459" y="459" font-size="27" fill="#000">I</text>
<text x="1858" y="459" font-size="27" fill="#000">M</text>
<text x="804" y="575" font-size="15" fill="#000">Trg</text>
<text x="817" y="625" font-size="15" fill="#000">T</text>
<text x="1316.5" y="575" font-size="15" fill="#000">R</text>
<text x="1304.5" y="600" font-size="15" fill="#000">Cnt</text>
<text x="1309.5" y="625" font-size="15" fill="#000">Dir</text>
<text x="1304.5" y="650" font-size="15" fill="#000">Par</text>
<text x="704" y="875" font-size="15" fill="#000">Trg</text>
<text x="716.5" y="900" font-size="15" fill="#000">R</text>
<rect x="850" y="574" width="34" height="3" fill="#000"/>
<rect x="850" y="574" width="2" height="23" fill="#000"/>
<rect x="842" y="594" width="10" height="3" fill="#000"/>
<rect x="882" y="574" width="2" height="23" fill="#000"/>
<rect x="882" y="594" width="10" height="3" fill="#000"/>
<rect x="850" y="604" width="2" height="7" fill="#000"/>
<rect x="850" y="614" width="2" height="8" fill="#000"/>
<rect x="842" y="621" width="20" height="3" fill="#000"/>
<rect x="1350" y="576" width="39" height="3" fill="#000"/>
<rect x="1350" y="576" width="2" height="21" fill="#000"/>
<rect x="1342" y="594" width="10" height="3" fill="#000"/>
<path d="M1345.500 583.500l5.500-6.500 6 5.500" fill="none" stroke="#000" stroke-width="2.500"/>
<rect x="1342" y="614" width="17" height="3" fill="#000"/>
<rect x="1350" y="604" width="2" height="20" fill="#000"/>
<rect x="1377" y="614" width="12" height="3" fill="#000"/>
<path d="M1374 604.500l-12 25" fill="none" stroke="#000" stroke-width="2.600"/>
<rect x="751" y="874" width="26" height="3" fill="#000"/>
<rect x="751" y="874" width="2" height="23" fill="#000"/>
<rect x="742" y="894" width="11" height="3" fill="#000"/>
<rect x="775" y="874" width="2" height="23" fill="#000"/>
<rect x="775" y="894" width="17" height="3" fill="#000"/>
<path d="M743.500 884l8.500-8.500 7 7.500" fill="none" stroke="#000" stroke-width="2.500"/>
<rect x="1357.500" y="671.250" width="20.500" height="20.500" fill="#f9fbfc" stroke="#858585" stroke-width="2.500"/><rect x="1361" y="680" width="13" height="3" fill="#2c4a9a"/>
<rect x="857.250" y="661.750" width="21" height="21" fill="#fff" stroke="#858585" stroke-width="2.500"/>
<text x="821" y="721" font-size="25" fill="#2143c0">Ta:</text>
<text x="833" y="755" font-size="25" fill="#2143c0">T:</text>
<text x="1356" y="730" font-size="25" fill="#2143c0" text-anchor="end">Cnt:</text>
<text x="1356" y="765" font-size="25" fill="#2143c0" text-anchor="end">On:</text>
<text x="1356" y="800" font-size="25" fill="#2143c0" text-anchor="end">Off:</text>
<text x="1379" y="730" font-size="25" fill="#2143c0">0</text>
<text x="1379" y="765" font-size="25" fill="#2143c0">2</text>
<text x="1379" y="800" font-size="25" fill="#2143c0">0</text>
<rect x="709" y="742.5" width="20" height="5" fill="#000"/>
<rect x="1474" y="718.0" width="20" height="5" fill="#000"/>
<rect x="1241" y="753.0" width="20" height="5" fill="#000"/>
<rect x="1241" y="788.0" width="20" height="5" fill="#000"/>
<circle cx="1271.500" cy="752.500" r="9.500" fill="#000"/>
<rect x="1000" y="751" width="271" height="3" fill="#f00"/>
<rect x="1270" y="601" width="2" height="304" fill="#f00"/>
<text x="1336" y="840" font-size="25" fill="#1b6b1b">Rem = off</text>
<text x="1336" y="875" font-size="25" fill="#1b6b1b">On=2+</text>
<text x="1336" y="910" font-size="25" fill="#1b6b1b">Off=0</text>
<text x="836" y="796" font-size="25" fill="#1b6b1b">Rem</text>
<text x="836" y="830" font-size="25" fill="#1b6b1b">02</text>
</svg></div>
<div class="a" style="left:1901px;top:230px;width:19px;height:675px;background:#f0f0f0"></div>
<div class="a" style="left:321px;top:905px;width:1599px;height:19px;background:#f0f0f0"></div>
<div class="a" style="left:1900px;top:230px;width:20px;height:19px;background:#f0f0f0;border:1px solid #a6a6a6"></div><svg style="left:1901px;top:230px" width="18" height="18"><path d="M4.500 11l4.500-4.500 4.500 4.500" fill="none" stroke="#000" stroke-width="2.400"/></svg>
<div class="a" style="left:1900px;top:885px;width:20px;height:19px;background:#f0f0f0;border:1px solid #a6a6a6"></div><svg style="left:1901px;top:885px" width="18" height="18"><path d="M4.500 7l4.500 4.500 4.500-4.500" fill="none" stroke="#000" stroke-width="2.400"/></svg>
<div class="a" style="left:1901px;top:250px;width:18px;height:55px;background:#f0f0f0;border:1px solid #a6a6a6"></div>
<div class="a" style="left:1906px;top:273px;width:8px;height:7px;background:repeating-linear-gradient(#bdbdbd 0 1px,transparent 1px 2px)"></div>
<div class="a" style="left:321px;top:905px;width:19px;height:19px;background:#f0f0f0;border:1px solid #a6a6a6"></div><svg style="left:321px;top:905px" width="18" height="18"><path d="M11 4.500l-4.500 4.500 4.500 4.500" fill="none" stroke="#000" stroke-width="2.400"/></svg>
<div class="a" style="left:1881px;top:905px;width:19px;height:19px;background:#f0f0f0;border:1px solid #a6a6a6"></div><svg style="left:1881px;top:905px" width="18" height="18"><path d="M7 4.500l4.500 4.500-4.500 4.500" fill="none" stroke="#000" stroke-width="2.400"/></svg>
<div class="a" style="left:341px;top:905px;width:620px;height:19px;background:#f0f0f0;border:1px solid #a6a6a6"></div>
<div class="a" style="left:646px;top:910px;width:7px;height:8px;background:repeating-linear-gradient(90deg,#bdbdbd 0 1px,transparent 1px 2px)"></div>
<div class="a" style="left:321px;top:924px;width:1599px;height:3px;background:#e4e4e4"></div>
<!-- sim panel -->
<svg style="left:0;top:0" width="0" height="0"><defs><linearGradient id="gbase" x1="0" y1="0" x2="0" y2="1"><stop offset="0" stop-color="#000"/><stop offset=".55" stop-color="#000"/><stop offset="1" stop-color="#5a5a5a"/></linearGradient></defs></svg>
<div class="a" style="left:321px;top:927px;width:1599px;height:89px;background:#efefef"></div>
<span class="a" style="left:330px;top:958px;font-size:26px;line-height:28px;transform:scaleX(1.25);transform-origin:0 50%">&laquo;</span>
<span class="a" style="left:699px;top:958px;font-size:26px;line-height:28px;transform:scaleX(1.25);transform-origin:0 50%">&laquo;</span>
<div class="a" style="left:353px;top:938px;width:48px;height:73px;background:#f0f0f0;border-top:2px solid #fff;border-left:2px solid #fff;border-bottom:2px solid #9c9c9c;border-right:2px solid #9c9c9c"></div>
<div class="a b" style="left:353px;top:942px;width:48px;height:18px;text-align:center;font-size:17.500px;line-height:18px;color:#8e8e8e;word-spacing:3px;-webkit-text-stroke:.5px #8e8e8e">0 1</div>
<div class="a" style="left:357px;top:960px;width:40px;height:23px;border:2px solid #a2a2a2;border-radius:12px;background:#f6f6f6"></div>
<div class="a" style="left:360px;top:963px;width:17px;height:17px;border-radius:9px;background:#929292"></div>
<span class="t" style="left:370px;top:990px;color:#808080;font-size:18px">I1</span>
<div class="a" style="left:401px;top:938px;width:48px;height:73px;background:#f0f0f0;border-top:2px solid #fff;border-left:2px solid #fff;border-bottom:2px solid #9c9c9c;border-right:2px solid #9c9c9c"></div>
<div class="a b" style="left:401px;top:942px;width:48px;height:18px;text-align:center;font-size:17.500px;line-height:18px;color:#8e8e8e;word-spacing:3px;-webkit-text-stroke:.5px #8e8e8e">0 1</div>
<div class="a" style="left:405px;top:960px;width:40px;height:23px;border:2px solid #a2a2a2;border-radius:12px;background:#f6f6f6"></div>
<div class="a" style="left:408px;top:963px;width:17px;height:17px;border-radius:9px;background:#929292"></div>
<span class="t" style="left:418px;top:990px;color:#808080;font-size:18px">I2</span>
<div class="a" style="left:449px;top:938px;width:48px;height:73px;background:#f0f0f0;border-top:2px solid #fff;border-left:2px solid #fff;border-bottom:2px solid #9c9c9c;border-right:2px solid #9c9c9c"></div>
<div class="a b" style="left:449px;top:942px;width:48px;height:18px;text-align:center;font-size:17.500px;line-height:18px;color:#8e8e8e;word-spacing:3px;-webkit-text-stroke:.5px #8e8e8e">0 1</div>
<div class="a" style="left:453px;top:960px;width:40px;height:23px;border:2px solid #a2a2a2;border-radius:12px;background:#f6f6f6"></div>
<div class="a" style="left:456px;top:963px;width:17px;height:17px;border-radius:9px;background:#929292"></div>
<span class="t" style="left:466px;top:990px;color:#808080;font-size:18px">I3</span>
<div class="a" style="left:497px;top:938px;width:48px;height:73px;background:#f0f0f0;border-top:2px solid #9c9c9c;border-left:2px solid #9c9c9c;border-bottom:2px solid #fff;border-right:2px solid #fff"></div>
<div class="a b" style="left:497px;top:942px;width:48px;height:18px;text-align:center;font-size:17.500px;line-height:18px;color:#8e8e8e;word-spacing:3px;-webkit-text-stroke:.5px #8e8e8e">0 1</div>
<div class="a" style="left:501px;top:960px;width:40px;height:23px;border:2px solid #a2a2a2;border-radius:12px;background:#f6f6f6"></div>
<div class="a" style="left:522px;top:963px;width:17px;height:17px;border-radius:9px;background:#929292"></div>
<span class="t" style="left:514px;top:990px;color:#808080;font-size:18px">I4</span>
<div class="a" style="left:545px;top:938px;width:48px;height:73px;background:#f0f0f0;border-top:2px solid #fff;border-left:2px solid #fff;border-bottom:2px solid #9c9c9c;border-right:2px solid #9c9c9c"></div>
<div class="a b" style="left:545px;top:942px;width:48px;height:18px;text-align:center;font-size:17.500px;line-height:18px;color:#8e8e8e;word-spacing:3px;-webkit-text-stroke:.5px #8e8e8e">0 1</div>
<div class="a" style="left:549px;top:960px;width:40px;height:23px;border:2px solid #a2a2a2;border-radius:12px;background:#f6f6f6"></div>
<div class="a" style="left:552px;top:963px;width:17px;height:17px;border-radius:9px;background:#929292"></div>
<span class="t" style="left:562px;top:990px;color:#808080;font-size:18px">I6</span>
<div class="a" style="left:593px;top:938px;width:48px;height:73px;background:#f0f0f0;border-top:2px solid #9c9c9c;border-left:2px solid #9c9c9c;border-bottom:2px solid #fff;border-right:2px solid #fff"></div>
<div class="a b" style="left:593px;top:942px;width:48px;height:18px;text-align:center;font-size:17.500px;line-height:18px;color:#8e8e8e;word-spacing:3px;-webkit-text-stroke:.5px #8e8e8e">0 1</div>
<div class="a" style="left:597px;top:960px;width:40px;height:23px;border:2px solid #a2a2a2;border-radius:12px;background:#f6f6f6"></div>
<div class="a" style="left:618px;top:963px;width:17px;height:17px;border-radius:9px;background:#929292"></div>
<span class="t" style="left:610px;top:990px;color:#808080;font-size:18px">I7</span>
<div class="a" style="left:641px;top:938px;width:48px;height:73px;background:#f0f0f0;border-top:2px solid #fff;border-left:2px solid #fff;border-bottom:2px solid #9c9c9c;border-right:2px solid #9c9c9c"></div>
<div class="a b" style="left:641px;top:942px;width:48px;height:18px;text-align:center;font-size:17.500px;line-height:18px;color:#8e8e8e;word-spacing:3px;-webkit-text-stroke:.5px #8e8e8e">0 1</div>
<div class="a" style="left:645px;top:960px;width:40px;height:23px;border:2px solid #a2a2a2;border-radius:12px;background:#f6f6f6"></div>
<div class="a" style="left:648px;top:963px;width:17px;height:17px;border-radius:9px;background:#929292"></div>
<span class="t" style="left:658px;top:990px;color:#808080;font-size:18px">I8</span>
<svg style="left:737px;top:946px" width="28" height="45" viewBox="0 0 28 46"><path d="M9 31.800L2.600 19.500A12.800 12.800 0 1 1 25.400 19.500L19 31.800z" fill="#7a7a7a" stroke="#5c5c5c" stroke-width="1"/><path d="M9 33.800h10v6a4 4 0 0 1-4 4h-2a4 4 0 0 1-4-4z" fill="url(#gbase)"/></svg>
<span class="t" style="left:740px;top:994px;font-size:17.500px">M1</span>
<svg style="left:795px;top:946px" width="28" height="45" viewBox="0 0 28 46"><path d="M9 31.800L2.600 19.500A12.800 12.800 0 1 1 25.400 19.500L19 31.800z" fill="#7a7a7a" stroke="#5c5c5c" stroke-width="1"/><path d="M9 33.800h10v6a4 4 0 0 1-4 4h-2a4 4 0 0 1-4-4z" fill="url(#gbase)"/></svg>
<span class="t" style="left:798px;top:994px;font-size:17.500px">M2</span>
<svg style="left:853px;top:946px" width="28" height="45" viewBox="0 0 28 46"><path d="M9 31.800L2.600 19.500A12.800 12.800 0 1 1 25.400 19.500L19 31.800z" fill="#7a7a7a" stroke="#5c5c5c" stroke-width="1"/><path d="M9 33.800h10v6a4 4 0 0 1-4 4h-2a4 4 0 0 1-4-4z" fill="url(#gbase)"/></svg>
<span class="t" style="left:856px;top:994px;font-size:17.500px">M3</span>
<svg style="left:911px;top:946px" width="28" height="45" viewBox="0 0 28 46"><path d="M9 31.800L2.600 19.500A12.800 12.800 0 1 1 25.400 19.500L19 31.800z" fill="#7a7a7a" stroke="#5c5c5c" stroke-width="1"/><path d="M9 33.800h10v6a4 4 0 0 1-4 4h-2a4 4 0 0 1-4-4z" fill="url(#gbase)"/></svg>
<span class="t" style="left:914px;top:994px;font-size:17.500px">M4</span>
<svg style="left:969px;top:946px" width="28" height="45" viewBox="0 0 28 46"><path d="M9 31.800L2.600 19.500A12.800 12.800 0 1 1 25.400 19.500L19 31.800z" fill="#7a7a7a" stroke="#5c5c5c" stroke-width="1"/><path d="M9 33.800h10v6a4 4 0 0 1-4 4h-2a4 4 0 0 1-4-4z" fill="url(#gbase)"/></svg>
<span class="t" style="left:972px;top:994px;font-size:17.500px">Q1</span>
<svg style="left:1027px;top:946px" width="28" height="45" viewBox="0 0 28 46"><path d="M9 31.800L2.600 19.500A12.800 12.800 0 1 1 25.400 19.500L19 31.800z" fill="#7a7a7a" stroke="#5c5c5c" stroke-width="1"/><path d="M9 33.800h10v6a4 4 0 0 1-4 4h-2a4 4 0 0 1-4-4z" fill="url(#gbase)"/></svg>
<span class="t" style="left:1030px;top:994px;font-size:17.500px">Q2</span>
<svg style="left:1085px;top:946px" width="28" height="45" viewBox="0 0 28 46"><path d="M9 31.800L2.600 19.500A12.800 12.800 0 1 1 25.400 19.500L19 31.800z" fill="#7a7a7a" stroke="#5c5c5c" stroke-width="1"/><path d="M9 33.800h10v6a4 4 0 0 1-4 4h-2a4 4 0 0 1-4-4z" fill="url(#gbase)"/></svg>
<span class="t" style="left:1088px;top:994px;font-size:17.500px">Q4</span>
<div class="a" style="left:1138px;top:955px;width:0;height:38px;border-left:2px dotted #c4c4c4"></div>
<div class="a" style="left:1148px;top:957px;width:1px;height:34px;background:#9a9a9a"></div>
<div class="a" style="left:1229px;top:957px;width:1px;height:34px;background:#9a9a9a"></div>
<svg style="left:1150px;top:950px" width="170" height="50" viewBox="1150 950 170 50">
<g filter="url(#sh)"><rect x="1158" y="958" width="24" height="30" fill="#8f8f8f"/><rect x="1158" y="962" width="24" height="2" fill="#a4a4a4"/><rect x="1160" y="970" width="12" height="10" fill="#9e9e9e"/><path d="M1171 975l13 6-13 6z" fill="#a8a8a8" stroke="#9a9a9a"/></g>
<g filter="url(#sh)"><rect x="1196" y="958" width="24" height="30" fill="#6c7384"/><rect x="1196" y="958" width="24" height="5" fill="#555b6a"/><rect x="1198" y="964" width="7" height="2" fill="#25c4b0"/><rect x="1196" y="966" width="10" height="20" fill="#12141c"/><rect x="1199" y="970" width="12" height="10" fill="#aab2c4"/><rect x="1209" y="975" width="13" height="12" fill="#f00" stroke="#fff" stroke-width="1.200"/></g>
<g fill="#4f9d50" filter="url(#sh)"><rect x="1235" y="962" width="6.500" height="6.500"/><rect x="1243" y="962" width="6.500" height="6.500"/><rect x="1251" y="962" width="6.500" height="6.500"/><rect x="1259" y="962" width="6.500" height="6.500"/><rect x="1235" y="970" width="6.500" height="6.500"/><rect x="1243" y="970" width="6.500" height="6.500"/><rect x="1251" y="970" width="6.500" height="6.500"/><rect x="1259" y="970" width="6.500" height="6.500"/><rect x="1235" y="978" width="6.500" height="6.500"/><rect x="1243" y="978" width="6.500" height="6.500"/><rect x="1251" y="978" width="6.500" height="6.500"/><rect x="1259" y="978" width="6.500" height="6.500"/></g>
<g filter="url(#sh)"><rect x="1274" y="959" width="28" height="28" fill="#fff" stroke="#aeb6dc" stroke-width="1.600"/></g>
<path d="M1278 965h5M1285 965h5M1292 965h5 M1278 972h5M1285 972h5M1292 972h5 M1278 977h5M1285 977h5M1292 977h5 M1278 982h5M1285 982h5M1292 982h5" stroke="#1212c8" stroke-width="2.200"/>
</svg>
<div class="a" style="left:1707px;top:1018px;width:1px;height:23px;background:#a8a8a8"></div><div class="a" style="left:1708px;top:1018px;width:1px;height:23px;background:#f4f4f4"></div>
<div class="a" style="left:1798px;top:1018px;width:1px;height:23px;background:#a8a8a8"></div><div class="a" style="left:1799px;top:1018px;width:1px;height:23px;background:#f4f4f4"></div>
<div class="a" style="left:1864px;top:1018px;width:1px;height:23px;background:#a8a8a8"></div><div class="a" style="left:1865px;top:1018px;width:1px;height:23px;background:#f4f4f4"></div>
<svg style="left:1711px;top:1020px" width="17" height="18"><rect x="0" y="1" width="16" height="16" fill="#707889"/><rect x="0" y="1" width="16" height="3" fill="#565c6c"/><rect x="0" y="5" width="7" height="10" fill="#12141c"/><rect x="2" y="6" width="7" height="7" fill="#fff"/><path d="M12 7v2M13 10v2" stroke="#9aa" stroke-width="1"/></svg>
<span class="t" style="left:1733px;top:1019px">LOGO! 8.4</span>
<span class="t" style="left:1803px;top:1019px">250%</span>
<span class="t" style="left:1869px;top:1019px">S. 1</span>
<!-- taskbar -->
<div class="a" style="left:0;top:1041px;width:1920px;height:1px;background:#8b8c95"></div>
<div class="a" style="left:0;top:1042px;width:1920px;height:38px;background:#1b1c2d"></div>
<div class="a" style="left:45px;top:1042px;width:323px;height:38px;background:#f3f3f3;border-top:1px solid #dcdcdc"></div>
<svg style="left:12px;top:1051px" width="20" height="20" viewBox="0 0 20 20"><path d="M0 3l8.500-1.200v7.700h-8.500z M9.500 1.600l10.500-1.600v9.500h-10.500z M0 10.500h8.500v7.700l-8.500-1.200z M9.500 10.500h10.500v9.500l-10.500-1.600z" fill="#fff"/></svg>
<svg style="left:58px;top:1048px" width="26" height="26" viewBox="0 0 26 26"><circle cx="15.500" cy="9.500" r="6.500" fill="none" stroke="#222" stroke-width="1.600"/><path d="M11 14.500l-8.500 8.500" stroke="#222" stroke-width="1.800"/></svg>
<div class="a" style="left:95px;top:1049px;font-size:18.100px;line-height:24px;color:#2a2a2a">Suche</div>
<svg style="left:370px;top:1041px" width="990" height="39" viewBox="370 1041 990 39" font-family="Liberation Sans,sans-serif">
<defs><linearGradient id="lgo" x1="0" y1="0" x2="1" y2="1"><stop offset="0" stop-color="#2f4558"/><stop offset="1" stop-color="#8296a6"/></linearGradient></defs>
<rect x="1291" y="1041" width="45" height="39" fill="#3c3e4e"/>
<rect x="468" y="1078" width="35" height="2" fill="#76b9ed"/>
<rect x="606" y="1078" width="35" height="2" fill="#76b9ed"/>
<rect x="1250" y="1078" width="35" height="2" fill="#76b9ed"/>
<rect x="1291" y="1078" width="45" height="2" fill="#76b9ed"/>
<g fill="none" stroke="#fff" stroke-width="1.500"><rect x="381.500" y="1056.500" width="11" height="9"/><path d="M380 1052.500h13v2 M380 1069.500h13v-2 M398.500 1051v6 M398.500 1062v8"/><rect x="397.500" y="1058" width="2" height="3" fill="#fff"/></g>
<rect x="434" y="1052" width="15" height="17" rx="1.500" fill="#28a8ea"/><path d="M434 1062l7.500 5 7.500-5v7h-15z" fill="#0f64b8"/><rect x="428" y="1055" width="12" height="12" rx="1.500" fill="#0f6cbd"/><text x="434" y="1065" font-size="10" font-weight="bold" fill="#fff" text-anchor="middle">o</text>
<circle cx="484.500" cy="1061" r="10" fill="#e8453c"/><path d="M484.500 1061l-8.700 5a10 10 0 0 0 8.700 5l4.400-7.500z" fill="#2da94f"/><path d="M484.500 1061h10a10 10 0 0 1-10 10l4.400-7.500z" fill="#fdbd00"/><path d="M476 1066a10 10 0 0 0 8.500 5l4.500-7.500h-9z" fill="#2da94f"/><circle cx="484.500" cy="1061" r="4.600" fill="#fff"/><circle cx="484.500" cy="1061" r="3.600" fill="#4a8af4"/>
<path d="M521 1053h7l2 2h10v3h-19z" fill="#e9a91c"/><rect x="521" y="1056" width="19" height="13" fill="#fcd462"/><path d="M525 1063h11v6h-3v-3h-5v3h-3z" fill="#3d8fd8"/>
<circle cx="576" cy="1061" r="9.500" fill="#2a48b8" stroke="#d8d8e8" stroke-width="1.500"/><path d="M571 1060a5 5 0 0 1 9-2l1.500-1.500v5h-5l1.800-1.800a3 3 0 0 0-5 .8z M581 1062a5 5 0 0 1-9 2l-1.500 1.500v-5h5l-1.800 1.800a3 3 0 0 0 5-.8z" fill="#fff"/>
<rect x="619" y="1052" width="14" height="18" rx="1.500" fill="#21a366"/><rect x="626" y="1052" width="7" height="9" fill="#33c481"/><rect x="626" y="1061" width="7" height="9" fill="#107c41"/><rect x="613" y="1055" width="12" height="12" rx="1.500" fill="#0f773d"/><text x="619" y="1065" font-size="10.500" font-weight="bold" fill="#fff" text-anchor="middle">X</text>
<rect x="665" y="1052" width="14" height="18" rx="1.500" fill="#2b7cd3"/><rect x="665" y="1052" width="14" height="6" fill="#41a5ee"/><rect x="665" y="1064" width="14" height="6" fill="#185abd"/><rect x="659" y="1055" width="12" height="12" rx="1.500" fill="#1651aa"/><text x="665" y="1065" font-size="10" font-weight="bold" fill="#fff" text-anchor="middle">W</text>
<rect x="704.5" y="1051" width="20" height="20" fill="url(#lgo)"/><text x="704.5" y="1060" font-family="Liberation Serif,serif" font-size="9.500" fill="#e8eef2" textLength="20" lengthAdjust="spacingAndGlyphs">LOGO</text><text x="712.5" y="1070" font-size="10" fill="#b9c6cf" textLength="12" lengthAdjust="spacingAndGlyphs">V8</text>
<circle cx="763" cy="1061" r="9.500" fill="#ed6c47"/><path d="M763 1051.500a9.500 9.500 0 0 1 9.500 9.500h-9.500z" fill="#ff8f6b"/><rect x="751" y="1055" width="12" height="12" rx="1.500" fill="#c43e1c"/><text x="757" y="1065" font-size="10.500" font-weight="bold" fill="#fff" text-anchor="middle">P</text>
<rect x="796.5" y="1051" width="20" height="20" fill="url(#lgo)"/><text x="796.5" y="1060" font-family="Liberation Serif,serif" font-size="9.500" fill="#e8eef2" textLength="20" lengthAdjust="spacingAndGlyphs">LOGO</text><text x="804.5" y="1070" font-size="10" fill="#b9c6cf" textLength="12" lengthAdjust="spacingAndGlyphs">V8</text>
<rect x="843" y="1051" width="20" height="20" fill="url(#lgo)"/><path d="M847 1056h8M857 1056h3M850 1059h4M855 1063h5" stroke="#fff" stroke-width="1.200"/>
<rect x="888.5" y="1051" width="20" height="20" fill="url(#lgo)"/><text x="888.5" y="1060" font-family="Liberation Serif,serif" font-size="9.500" fill="#e8eef2" textLength="20" lengthAdjust="spacingAndGlyphs">LOGO</text><text x="896.5" y="1070" font-size="10" fill="#b9c6cf" textLength="12" lengthAdjust="spacingAndGlyphs">V8</text>
<rect x="935" y="1052" width="18" height="18" rx="3" fill="#c20a0a"/><path d="M939 1066c3-3 5-8 5-11 0 4 3 8 6 9-4 0-8 1-11 2z" fill="none" stroke="#fff" stroke-width="1.400"/>
<rect x="990" y="1052" width="11" height="12" fill="#0f78d4"/><rect x="981" y="1055" width="11" height="9" fill="#0a5cab"/><circle cx="988" cy="1059" r="3.200" fill="#3ec8f4"/><path d="M982 1071c0-5 3-7 6-7s6 2 6 7z" fill="#3ec8f4"/>
<path d="M1037 1052l6 14h-12z" fill="#f48b00"/><path d="M1034.500 1058h5l1.300 3h-7.600z M1032.500 1063.500h9l.8 2h-10.600z" fill="#fff"/><path d="M1028 1066h18l1 4h-20z" fill="#f48b00"/>
<path d="M1076 1054l5 3 3-4 3 5 5 1-4 3 3 5-5-1-2 5-3-4-5 2 2-5-5-3 5-1z" fill="#c01616"/><circle cx="1078" cy="1055" r="2" fill="#e88"/>
<rect x="1120" y="1051" width="15" height="20" rx="1" fill="#8a97a5"/><rect x="1122" y="1053" width="11" height="4" fill="#58c8f0"/><path d="M1122 1059h3v3h-3zM1126 1059h3v3h-3zM1130 1059h3v3h-3zM1122 1063h3v3h-3zM1126 1063h3v3h-3zM1122 1067h3v3h-3zM1126 1067h3v3h-3z" fill="#e8eef4"/><rect x="1130" y="1063" width="3" height="7" fill="#1868b8"/>
<path d="M1164 1062l16-7 1 2-16 7z" fill="#e8f0f8"/><path d="M1164 1064h20v6h-20z" fill="#2a98dc"/><path d="M1164 1066h20" stroke="#bfe4fa" stroke-width="1.200"/>
<rect x="1211" y="1052" width="18" height="18" rx="3" fill="#c81e1e"/><text x="1213" y="1059" font-size="6" fill="#fff">PDF</text><path d="M1215 1068l10-8 2 2-9 7z" fill="#fff"/>
<circle cx="1272" cy="1055" r="2.600" fill="#7b83eb"/><rect x="1268" y="1058" width="8" height="9" rx="2" fill="#5059c9"/><circle cx="1266" cy="1054" r="3.200" fill="#7b83eb"/><path d="M1260 1058h11v8a5.500 5.500 0 0 1-11 0z" fill="#7b83eb"/><rect x="1256" y="1057" width="10" height="10" rx="1.500" fill="#4b53bc"/><text x="1261" y="1065" font-size="8.500" font-weight="bold" fill="#fff" text-anchor="middle">T</text>
<rect x="1302.5" y="1051" width="20" height="20" fill="url(#lgo)"/><text x="1302.5" y="1060" font-family="Liberation Serif,serif" font-size="9.500" fill="#e8eef2" textLength="20" lengthAdjust="spacingAndGlyphs">LOGO</text><text x="1310.5" y="1070" font-size="10" fill="#b9c6cf" textLength="12" lengthAdjust="spacingAndGlyphs">V8</text>
</svg>
<svg style="left:1520px;top:1041px" width="400" height="39" viewBox="1520 1041 400 39" font-family="Liberation Sans,sans-serif">
<path d="M1525 1065l8-8 8 8" fill="none" stroke="#fff" stroke-width="1.500"/>
<rect x="1557" y="1057" width="15" height="9" fill="none" stroke="#fff" stroke-width="1.300"/><rect x="1559" y="1059" width="8" height="5" fill="#fff"/><rect x="1572.500" y="1059.500" width="1.500" height="4" fill="#fff"/><path d="M1554 1054v3M1557 1054v3M1553 1057h5v3h-5z" stroke="#fff" stroke-width="1" fill="#fff"/>
<rect x="1583" y="1052" width="20" height="20" fill="#2d95d4" stroke="#9cd0f0" stroke-width="1"/><rect x="1587" y="1057" width="8" height="7" fill="none" stroke="#e8f4fc" stroke-width="1"/><rect x="1591" y="1060" width="8" height="7" fill="none" stroke="#e8f4fc" stroke-width="1"/>
<rect x="1619" y="1053" width="12" height="13" rx="1" fill="#28a8ea"/><rect x="1614" y="1055" width="9" height="9" rx="1" fill="#0f6cbd"/><text x="1618.500" y="1062.500" font-size="8" font-weight="bold" fill="#fff" text-anchor="middle">o</text><circle cx="1627" cy="1066" r="4.500" fill="#e06a1a"/><circle cx="1627" cy="1066" r="1.800" fill="#1b1c2d"/>
<rect x="1644" y="1054" width="18" height="15" rx="4" fill="#f4ec18" stroke="#8a8a20" stroke-width=".8"/><path d="M1644 1059h6v6h-6M1662 1059h-6v6h6M1650 1054v15M1656 1054v15" fill="none" stroke="#6a6a10" stroke-width=".9"/>
<path d="M1675 1068a4 4 0 0 1 0-8 6 6 0 0 1 11-1 4.500 4.500 0 0 1 3 9z" fill="#1a8fe8"/><path d="M1679 1068l8-8a4.500 4.500 0 0 1 2 8z" fill="#0f6cbd"/>
<g fill="none" stroke="#fff" stroke-width="1.300"><path d="M1706 1069a13 13 0 0 1 13-13" opacity=".75"/><path d="M1710 1069a9 9 0 0 1 9-9" opacity=".75"/><path d="M1714 1069a5 5 0 0 1 5-5"/></g><circle cx="1718.500" cy="1068.500" r="1.400" fill="#fff"/>
<path d="M1733 1058h3l4-4v14l-4-4h-3z" fill="none" stroke="#fff" stroke-width="1.200"/><path d="M1743 1058a4 4 0 0 1 0 6 M1746 1055a8 8 0 0 1 0 12 M1749 1052a12 12 0 0 1 0 18" fill="none" stroke="#fff" stroke-width="1.200"/>
<text x="1766" y="1067" font-size="14.500" fill="#fff" textLength="29" lengthAdjust="spacingAndGlyphs">DEU</text>
<text x="1810" y="1067" font-size="14.500" fill="#fff" textLength="36" lengthAdjust="spacingAndGlyphs">07:08</text>
<path d="M1869 1052h20v15h-7l-3 3-3-3h-7z" fill="#fff"/><path d="M1873 1056h12M1873 1059h12M1873 1062h9" stroke="#1b1c2d" stroke-width="1.200"/>
<rect x="1914" y="1041" width="1" height="39" fill="#6a6a78"/>
</svg>
<!-- context menu -->
<div class="a" style="left:861px;top:595px;width:241px;height:336px;background:#f2f2f2;border:1px solid #a0a0a0"></div>
<div class="a" style="left:912px;top:596px;width:1px;height:334px;background:#ececec"></div>
<div class="a" style="left:864px;top:640px;width:235px;height:42px;background:#91c9f7"></div>
<div class="a" style="left:913px;top:688px;width:185px;height:1px;background:#cfcfcf"></div>
<div class="a" style="left:913px;top:826px;width:185px;height:1px;background:#cfcfcf"></div>
<div class="a" style="left:913px;top:880px;width:185px;height:1px;background:#cfcfcf"></div>
<span class="t" style="left:916px;top:609px;color:#808080">Block Properties...</span>
<span class="t" style="left:916px;top:651px;color:#000">Remote properties...</span>
<span class="t" style="left:916px;top:705px;color:#808080">Cut</span>
<span class="t" style="left:1046px;top:705px;color:#808080">Ctrl+X</span>
<span class="t" style="left:916px;top:747px;color:#808080">Copy</span>
<span class="t" style="left:1046px;top:747px;color:#808080">Ctrl+C</span>
<span class="t" style="left:916px;top:789px;color:#808080">Delete</span>
<span class="t" style="left:1046px;top:789px;color:#808080">Delete</span>
<span class="t" style="left:916px;top:843px;color:#808080">Select All</span>
<span class="t" style="left:1046px;top:843px;color:#808080">Ctrl+A</span>
<span class="t" style="left:916px;top:897px;color:#000">Help</span>
<svg style="left:862px;top:595px" width="240" height="335" viewBox="862 595 240 335">
<g filter="url(#sh)" stroke="#8a8a8a" fill="none"><path d="M879 700c2 8 6 15 12 22 M897 700c-2 8-6 15-12 22" stroke-width="3"/><circle cx="882" cy="724" r="3.600" stroke-width="2.200"/><circle cx="894" cy="724" r="3.600" stroke-width="2.200"/></g>
<g filter="url(#sh)"><rect x="873" y="741" width="20" height="24" fill="#979797"/><path d="M876 746h6M876 750h6M876 754h6M876 758h6" stroke="#b8b8b8" stroke-width="1.500"/><rect x="883" y="745" width="20" height="26" fill="#8f8f8f"/><path d="M887 752h12M887 756h12M887 760h12M887 764h12" stroke="#bdbdbd" stroke-width="1.500"/></g>
<g filter="url(#sh)"><path d="M878 788c6 5 15 14 22 22 M900 787c-8 7-16 16-22 24" stroke="#8a8a8a" stroke-width="3.600" stroke-linecap="round" fill="none"/></g>
<g filter="url(#sh)" fill="#8f8f8f"><rect x="877" y="841" width="13" height="13"/><rect x="888" y="851" width="11" height="12"/><path d="M875 839h4v4h-4zM888 839h4v4h-4zM875 852h4v4h-4zM897 848h4v4h-4zM886 861h4v4h-4zM897 861h4v4h-4z" fill="#777"/></g>
<g filter="url(#sh)"><rect x="874" y="892" width="28" height="28" fill="#e1e4fc" stroke="#8088e8" stroke-width="1.600"/><path d="M877 898h6M877 903h6M877 908h6M877 913h6 M886 898h13M886 903h8M886 908h13M886 913h10" stroke="#111150" stroke-width="2"/></g>
</svg>
</body>
</html>
